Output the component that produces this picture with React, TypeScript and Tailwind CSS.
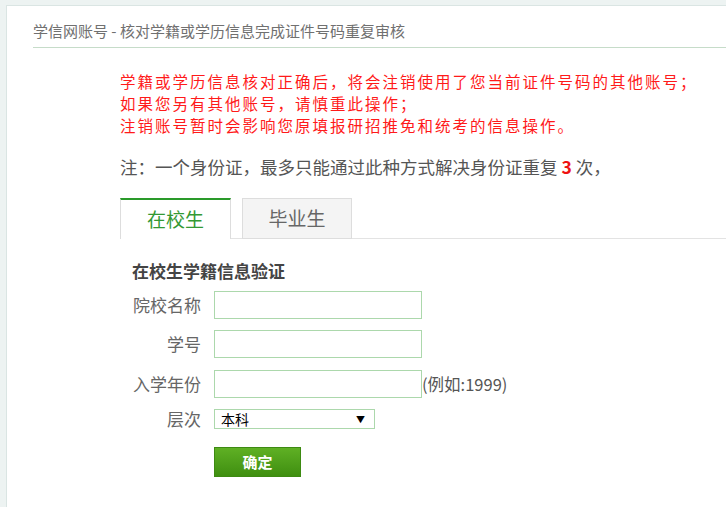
import { useState } from "react";

const cjk = "font-['Microsoft_YaHei','Noto_Sans_CJK_SC',sans-serif]";

function Field({ label, children }: { label: string; children: React.ReactNode }) {
  return (
    <div className="flex items-center">
      <div className="w-[69px] text-right text-[17px] leading-[22px] text-[#666] whitespace-nowrap">{label}</div>
      <div className="ml-[13px] flex items-center">{children}</div>
    </div>
  );
}

export default function App() {
  const [tab, setTab] = useState<"in" | "out">("in");

  return (
    <div className={`min-h-screen bg-[#edf3f2] pt-[5px] pl-[6px] ${cjk}`}>
      <div className="min-h-[502px] bg-white border-l border-t border-[#dae5e3]">
        {/* Header */}
        <div className="ml-[26px] pt-[15px] pb-[6px] border-b border-[#c6dcc9]">
          <h1 className="text-[15px] leading-[20px] text-[#707070] whitespace-nowrap">
            学信网账号 - 核对学籍或学历信息完成证件号码重复审核
          </h1>
        </div>

        <div className="pl-[113px]">
          {/* Warning */}
          <div className="mt-[22px] text-[15.5px] tracking-[2px] leading-[22px] text-[#ff1a1a] whitespace-nowrap">
            <p>学籍或学历信息核对正确后，将会注销使用了您当前证件号码的其他账号；</p>
            <p>如果您另有其他账号，请慎重此操作；</p>
            <p>注销账号暂时会影响您原填报研招推免和统考的信息操作。</p>
          </div>

          <p className="mt-[20px] text-[17.5px] leading-[22px] text-[#555] whitespace-nowrap">
            注：一个身份证，最多只能通过此种方式解决身份证重复 <span className="font-bold text-[#ee1111]">3</span> 次，
          </p>

          {/* Tabs */}
          <div className="mt-[20px] flex items-end gap-[11px] border-b border-[#e3e3e3] h-[41px]">
            <button
              onClick={() => setTab("in")}
              className={`w-[111px] h-[41px] -mb-px text-[19px] ${
                tab === "in"
                  ? "bg-white border-l border-r border-t-2 border-[#dddddd] border-t-[#2a9a2a] text-[#339933]"
                  : "bg-[#f4f4f4] border border-[#dddddd] text-[#666]"
              }`}
            >
              在校生
            </button>
            <button
              onClick={() => setTab("out")}
              className={`w-[110px] h-[41px] -mb-px text-[19px] ${
                tab === "out"
                  ? "bg-white border-l border-r border-t-2 border-[#dddddd] border-t-[#2a9a2a] text-[#339933]"
                  : "bg-[#f4f4f4] border border-[#dddddd] text-[#666]"
              }`}
            >
              毕业生
            </button>
          </div>

          {/* Form */}
          <div className="pl-[12px]">
            <h2 className="mt-[21px] text-[17px] leading-[22px] font-bold text-[#444]">在校生学籍信息验证</h2>

            <div className="mt-[9px] flex flex-col">
              <Field label="院校名称">
                <input className="w-[208px] h-[28px] border border-[#acd8ac] outline-none px-1" />
              </Field>
              <div className="mt-[11px]">
                <Field label="学号">
                  <input className="w-[208px] h-[28px] border border-[#acd8ac] outline-none px-1" />
                </Field>
              </div>
              <div className="mt-[12px]">
                <Field label="入学年份">
                  <input className="w-[208px] h-[28px] border border-[#acd8ac] outline-none px-1" />
                  <span className="text-[16.5px] text-[#555] whitespace-nowrap">(例如:1999)</span>
                </Field>
              </div>
              <div className="mt-[10px]">
                <Field label="层次">
                  <div className="w-[161px] h-[20px] border border-[#acd8ac] flex items-center justify-between pl-[6px] pr-[9px]">
                    <span className="text-[14px] leading-none text-black">本科</span>
                    <span className="text-[9px] leading-none text-black">▼</span>
                  </div>
                </Field>
              </div>
              <div className="mt-[17px] ml-[82px]">
                <button className="w-[87px] h-[30px] border border-[#3d8a12] bg-gradient-to-b from-[#5fb024] to-[#3f8f10] text-white text-[15px] font-bold">
                  确定
                </button>
              </div>
            </div>
          </div>
        </div>
      </div>
    </div>
  );
}
